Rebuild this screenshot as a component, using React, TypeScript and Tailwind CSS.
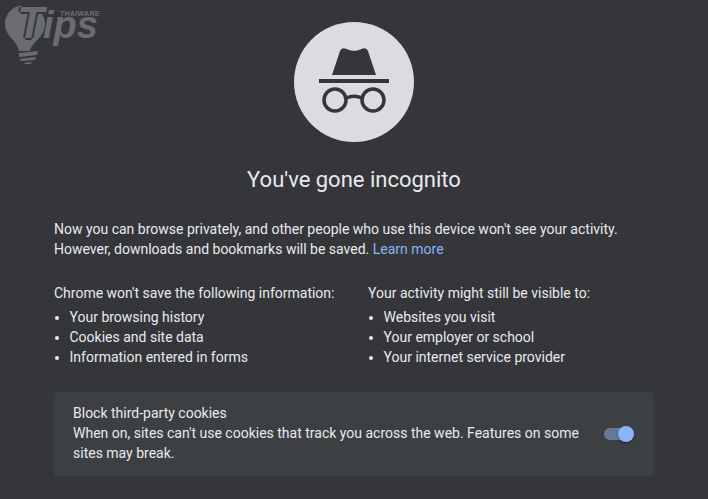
import React from 'react';

const leftList = ['Your browsing history', 'Cookies and site data', 'Information entered in forms'];
const rightList = ['Websites you visit', 'Your employer or school', 'Your internet service provider'];

const Watermark: React.FC = () => (
  <div className="absolute left-0 top-0 w-[110px] h-[70px] text-[#6b6c6f]">
    <svg className="absolute left-[4px] top-[4px]" width="44" height="60" viewBox="0 0 44 60" fill="currentColor">
      <path d="M21 1C10 1 1 9 1 20c0 6 3 10 6 14 3 3 6 6 8 13h11c1-8 15-14 15-27C41 9 32 1 21 1z" />
      <path d="M15 49l19-2-1 4-18 2z" />
      <path d="M16 55l16-2-1 3-14 1z" />
      <path d="M20 59l9-1-3 2h-5z" />
    </svg>
    <div className="absolute left-[17px] top-0 flex items-baseline font-['Liberation_Sans',sans-serif] font-bold italic leading-[46px] text-[#6b6c6f]">
      <span className="text-[44px] [text-shadow:2px_0_0_#35363a,-2px_0_0_#35363a,0_2px_0_#35363a,0_-2px_0_#35363a]">T</span>
      <span className="text-[38px] -ml-[1px]">ips</span>
    </div>
    <span className="absolute left-[60px] top-[10px] font-['Liberation_Sans',sans-serif] font-bold text-[7px] leading-[8px] tracking-[0.3px]">
      THAIWARE
    </span>
  </div>
);

const IncognitoIcon: React.FC = () => (
  <div className="w-[120px] h-[120px] rounded-full bg-[#dadce0] flex items-center justify-center">
    <svg width="120" height="120" viewBox="0 0 120 120">
      <path d="M38 53L46 29Q47.500 25.500 51 26.500L56 28.200Q60 29.200 64 28.200L69 26.500Q72.500 25.500 74 29L82 53z" fill="#35363a" />
      <rect x="25" y="57" width="70" height="4" fill="#35363a" />
      <g fill="none" stroke="#35363a" strokeWidth="3.500">
        <circle cx="41" cy="78" r="11" />
        <circle cx="79" cy="78" r="11" />
        <path d="M52 76Q60 72.500 68 76" />
      </g>
    </svg>
  </div>
);

const InfoColumn: React.FC<{ head: string; items: string[] }> = ({ head, items }) => (
  <div className="flex-1">
    <div>{head}</div>
    <ul className="list-disc pl-[15.5px] mt-[4px]">
      {items.map(item => (
        <li key={item}>{item}</li>
      ))}
    </ul>
  </div>
);

const App: React.FC = () => {
  return (
    <div className="relative w-[708px] h-[499px] overflow-hidden bg-[#35363a] text-[#e8eaed] font-['Roboto',sans-serif] text-[14px] leading-[20px]">
      <Watermark />
      <div className="flex flex-col items-center pt-[22px]">
        <IncognitoIcon />
        <h1 className="mt-[24px] text-[22px] leading-[28px] font-normal">You've gone incognito</h1>
      </div>
      <div className="mx-[54px] mt-[25px]">
        <p>
          Now you can browse privately, and other people who use this device won't see your activity.
          <br />
          However, downloads and bookmarks will be saved. <span className="text-[#8ab4f8]">Learn more</span>
        </p>
        <div className="flex mt-[24px]">
          <div className="w-[314px]">
            <InfoColumn head="Chrome won't save the following information:" items={leftList} />
          </div>
          <InfoColumn head="Your activity might still be visible to:" items={rightList} />
        </div>
        <div className="mt-[25px] h-[84px] rounded-[4px] bg-[#3d4043] flex items-center justify-between pl-[19px] pr-[20px]">
          <div className="w-[520px] mb-[2px]">
            <div>Block third-party cookies</div>
            <div>When on, sites can't use cookies that track you across the web. Features on some sites may break.</div>
          </div>
          <div className="relative w-[30px] h-[16px] flex items-center">
            <div className="w-[28px] h-[12px] rounded-full bg-[#64789a]" />
            <div className="absolute right-0 top-0 w-[16px] h-[16px] rounded-full bg-[#8ab4f8] shadow-[0_1px_2px_rgba(0,0,0,0.4)]" />
          </div>
        </div>
      </div>
    </div>
  );
};

export default App;
